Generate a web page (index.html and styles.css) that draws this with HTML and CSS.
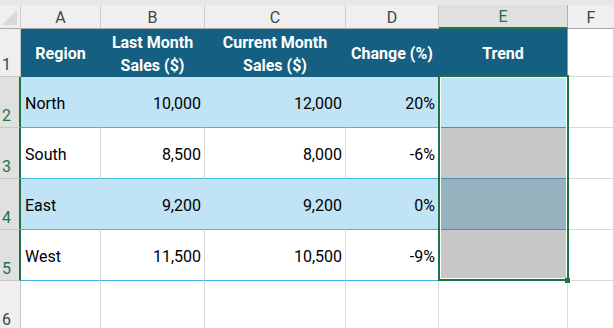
FILE: index.html
```html
<!DOCTYPE html>
<html>
<head>
<meta charset="utf-8">
<link rel="stylesheet" href="styles.css">
</head>
<body>
<div class="strip"></div>
<div class="sheet">
  <div class="corner"><span class="tri"></span></div>
  <div class="ch">A</div>
  <div class="ch">B</div>
  <div class="ch">C</div>
  <div class="ch">D</div>
  <div class="ch ch-sel">E</div>
  <div class="ch ch-f">F</div>

  <div class="rh">1</div>
  <div class="th">Region</div>
  <div class="th">Last Month<br>Sales ($)</div>
  <div class="th">Current Month<br>Sales ($)</div>
  <div class="th">Change (%)</div>
  <div class="th th-last">Trend</div>
  <div class="gc"></div>

  <div class="rh rh-sel">2</div>
  <div class="td band">North</div>
  <div class="td band num">10,000</div>
  <div class="td band num">12,000</div>
  <div class="td band num">20%</div>
  <div class="td trend t-blue"></div>
  <div class="gc"></div>

  <div class="rh rh-sel">3</div>
  <div class="td plain">South</div>
  <div class="td plain num">8,500</div>
  <div class="td plain num">8,000</div>
  <div class="td plain num">-6%</div>
  <div class="td trend t-grey"></div>
  <div class="gc"></div>

  <div class="rh rh-sel">4</div>
  <div class="td band">East</div>
  <div class="td band num">9,200</div>
  <div class="td band num">9,200</div>
  <div class="td band num">0%</div>
  <div class="td trend t-slate"></div>
  <div class="gc"></div>

  <div class="rh rh-sel">5</div>
  <div class="td plain">West</div>
  <div class="td plain num">11,500</div>
  <div class="td plain num">10,500</div>
  <div class="td plain num">-9%</div>
  <div class="td trend t-grey"></div>
  <div class="gc"></div>

  <div class="rh">6</div>
  <div class="gc"></div>
  <div class="gc"></div>
  <div class="gc"></div>
  <div class="gc"></div>
  <div class="gc"></div>
  <div class="gc"></div>

  <div class="selection"></div>
  <div class="handle"></div>
</div>
</body>
</html>
```

FILE: styles.css
```css
* { box-sizing: border-box; }

html, body {
  margin: 0;
  padding: 0;
  background: #ffffff;
  overflow: hidden;
}

body {
  font-family: Roboto, "Liberation Sans", sans-serif;
  font-size: 16px;
  color: #000;
}

.strip {
  height: 5px;
  background: #e8e6e8;
}

.sheet {
  position: relative;
  display: grid;
  grid-template-columns: 21px 80px 104px 141px 93px 129px 1fr;
  grid-template-rows: 24px 48px 51px 51px 51px 51px 51px;
}

.corner {
  position: relative;
  background: #efefef;
  border-right: 1px solid #cfcfcf;
  border-bottom: 1px solid #a8a8a8;
}

.tri {
  position: absolute;
  right: 3px;
  bottom: 3px;
  width: 0;
  height: 0;
  border-left: 15px solid transparent;
  border-bottom: 15px solid #d9d9d9;
}

.ch {
  background: #efefef;
  border-right: 1px solid #cdcdcd;
  border-bottom: 1px solid #a8a8a8;
  display: flex;
  align-items: center;
  justify-content: center;
  color: #444;
  font-size: 16px;
  padding-top: 1px;
}

.ch-sel {
  background: #e0e0e0;
  color: #217346;
  border-bottom: 2px solid #217346;
  border-right-color: #b0b0b0;
}

.ch-f { border-right: none; }

.rh {
  background: #efefef;
  border-right: 1px solid #c8c8c8;
  border-bottom: 1px solid #c8c8c8;
  display: flex;
  align-items: flex-end;
  padding-left: 2px;
  padding-bottom: 1px;
  color: #444;
  font-size: 16px;
  line-height: 20px;
}

.rh-sel {
  background: #e0e0e0;
  color: #217346;
  border-right: 2px solid #217346;
}

.th {
  background: #156082;
  color: #ffffff;
  font-weight: bold;
  line-height: 23px;
  text-align: center;
  display: flex;
  align-items: center;
  justify-content: center;
  padding-top: 2px;
  border-right: 1px solid #156082;
  border-bottom: 1px solid #156082;
}

.th-last { border-right-color: #44b3e1; }

.td {
  display: flex;
  align-items: center;
  padding: 2px 3px 0 4px;
  border-bottom: 1px solid #44b3e1;
}

.num { justify-content: flex-end; padding-right: 3px; }

.band {
  background: #c0e4f5;
  border-right: 1px solid #c0e4f5;
}

.plain {
  background: #ffffff;
  border-right: 1px solid #d9d9d9;
}

.trend {
  border-right: 1px solid #d9d9d9;
  border-bottom: 1px solid #4a8fb6;
}

.t-blue { background: #c0e4f5; }
.t-grey { background: #c8c8c8; }
.t-slate { background: #97b2bf; }

.gc {
  border-right: 1px solid #d9d9d9;
  border-bottom: 1px solid #d9d9d9;
}

.selection {
  position: absolute;
  left: 438px;
  top: 70px;
  width: 131px;
  height: 206px;
  border: 2px solid #217346;
  box-shadow: inset 0 0 0 1px #ffffff;
  pointer-events: none;
}

.handle {
  position: absolute;
  left: 565px;
  top: 273px;
  width: 5px;
  height: 5px;
  background: #217346;
}
```
